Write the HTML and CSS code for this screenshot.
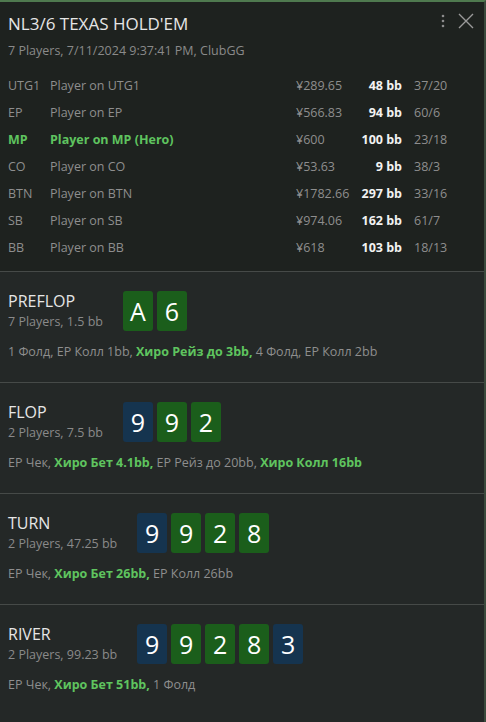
FILE: index.html
```html
<!DOCTYPE html>
<html lang="en">
<head>
<meta charset="UTF-8">
<meta name="viewport" content="width=device-width, initial-scale=1.0">
<title>Hand History</title>
<link rel="stylesheet" href="styles.css">
</head>
<body>
  <div class="hand-panel">
    <div class="hand-header">
      <div class="header-top">
        <h1 class="hand-title">NL3/6 TEXAS HOLD'EM</h1>
        <div class="header-icons">
          <svg class="icon-more" width="6" height="16" viewBox="0 0 6 16">
            <circle cx="3" cy="3" r="1.3" fill="#8c8c8c"/>
            <circle cx="3" cy="8" r="1.3" fill="#8c8c8c"/>
            <circle cx="3" cy="13" r="1.3" fill="#8c8c8c"/>
          </svg>
          <svg class="icon-close" width="16" height="16" viewBox="0 0 16 16">
            <path d="M1 1 L15 15 M15 1 L1 15" stroke="#9a9a9a" stroke-width="1.4" fill="none"/>
          </svg>
        </div>
      </div>
      <div class="hand-info">7 Players, 7/11/2024 9:37:41 PM, ClubGG</div>

      <div class="players">
        <div class="player-row">
          <span>UTG1</span><span>Player on UTG1</span><span>¥289.65</span><span class="stack">48 bb</span><span>37/20</span>
        </div>
        <div class="player-row">
          <span>EP</span><span>Player on EP</span><span>¥566.83</span><span class="stack">94 bb</span><span>60/6</span>
        </div>
        <div class="player-row hero">
          <span>MP</span><span>Player on MP (Hero)</span><span>¥600</span><span class="stack">100 bb</span><span>23/18</span>
        </div>
        <div class="player-row">
          <span>CO</span><span>Player on CO</span><span>¥53.63</span><span class="stack">9 bb</span><span>38/3</span>
        </div>
        <div class="player-row">
          <span>BTN</span><span>Player on BTN</span><span>¥1782.66</span><span class="stack">297 bb</span><span>33/16</span>
        </div>
        <div class="player-row">
          <span>SB</span><span>Player on SB</span><span>¥974.06</span><span class="stack">162 bb</span><span>61/7</span>
        </div>
        <div class="player-row">
          <span>BB</span><span>Player on BB</span><span>¥618</span><span class="stack">103 bb</span><span>18/13</span>
        </div>
      </div>
    </div>

    <div class="street">
      <div class="street-top">
        <div class="street-label">
          <div class="street-name">PREFLOP</div>
          <div class="street-info">7 Players, 1.5 bb</div>
        </div>
        <div class="cards">
          <span class="card green">A</span>
          <span class="card green">6</span>
        </div>
      </div>
      <div class="actions">1 Фолд, EP Колл 1bb, <b>Хиро Рейз до 3bb,</b> 4 Фолд, EP Колл 2bb</div>
    </div>

    <div class="street">
      <div class="street-top">
        <div class="street-label">
          <div class="street-name">FLOP</div>
          <div class="street-info">2 Players, 7.5 bb</div>
        </div>
        <div class="cards">
          <span class="card blue">9</span>
          <span class="card green">9</span>
          <span class="card green">2</span>
        </div>
      </div>
      <div class="actions">EP Чек, <b>Хиро Бет 4.1bb,</b> EP Рейз до 20bb, <b>Хиро Колл 16bb</b></div>
    </div>

    <div class="street">
      <div class="street-top">
        <div class="street-label">
          <div class="street-name">TURN</div>
          <div class="street-info">2 Players, 47.25 bb</div>
        </div>
        <div class="cards">
          <span class="card blue">9</span>
          <span class="card green">9</span>
          <span class="card green">2</span>
          <span class="card green">8</span>
        </div>
      </div>
      <div class="actions">EP Чек, <b>Хиро Бет 26bb,</b> EP Колл 26bb</div>
    </div>

    <div class="street">
      <div class="street-top">
        <div class="street-label">
          <div class="street-name">RIVER</div>
          <div class="street-info">2 Players, 99.23 bb</div>
        </div>
        <div class="cards">
          <span class="card blue">9</span>
          <span class="card green">9</span>
          <span class="card green">2</span>
          <span class="card green">8</span>
          <span class="card blue">3</span>
        </div>
      </div>
      <div class="actions">EP Чек, <b>Хиро Бет 51bb,</b> 1 Фолд</div>
    </div>
  </div>
</body>
</html>
```

FILE: styles.css
```css
body {
  margin: 0;
  padding: 0;
  background-color: #242827;
  font-family: "Open Sans", "Noto Sans", sans-serif;
  color: #8e8e8e;
}

.hand-panel {
  width: 486px;
  height: 722px;
  box-sizing: border-box;
  border-top: 2px solid #4f7a4f;
  border-right: 2px solid #3a4a3c;
  background-color: #242827;
  overflow: hidden;
}

.hand-header {
  background-color: #1e221f;
  padding: 10px 8px 10px;
  border-bottom: 1px solid #464a48;
}

.header-top {
  display: flex;
  justify-content: space-between;
  align-items: flex-start;
}

.hand-title {
  margin: 0;
  font-size: 17px;
  font-weight: normal;
  line-height: 24px;
  color: #e6e6e6;
}

.header-icons {
  display: flex;
  align-items: center;
  gap: 12px;
  padding-top: 1px;
  padding-right: 2px;
}

.hand-info {
  margin-top: 6px;
  font-size: 12.5px;
  line-height: 18px;
  color: #8a8a8a;
}

.players {
  margin-top: 12px;
}

.player-row {
  display: grid;
  grid-template-columns: 42px 246px 50px 56px auto;
  height: 27px;
  align-items: center;
  font-size: 12.5px;
  color: #8e8e8e;
}

.player-row .stack {
  text-align: right;
  font-weight: bold;
  color: #f2f2f2;
}

.player-row span:last-child {
  padding-left: 12px;
}

.player-row.hero span:nth-child(1),
.player-row.hero span:nth-child(2) {
  color: #5fc45f;
  font-weight: bold;
}

.street {
  padding: 19px 8px 21px;
  border-bottom: 1px solid #464a48;
}

.street:last-child {
  border-bottom: none;
}

.street-top {
  display: flex;
  align-items: center;
  gap: 20px;
}

.street-name {
  font-size: 16px;
  line-height: 20px;
  color: #e6e6e6;
}

.street-info {
  margin-top: 2px;
  font-size: 12.5px;
  line-height: 18px;
  color: #8a8a8a;
}

.cards {
  display: flex;
  gap: 4px;
}

.card {
  width: 30px;
  height: 40px;
  border-radius: 3px;
  display: flex;
  justify-content: center;
  align-items: center;
  font-size: 25px;
  color: #ffffff;
}

.card.green {
  background-color: #1b5e1b;
}

.card.blue {
  background-color: #15344f;
}

.actions {
  margin-top: 12px;
  font-size: 12.5px;
  line-height: 18px;
  color: #8e8e8e;
}

.actions b {
  color: #5fc45f;
}
```
